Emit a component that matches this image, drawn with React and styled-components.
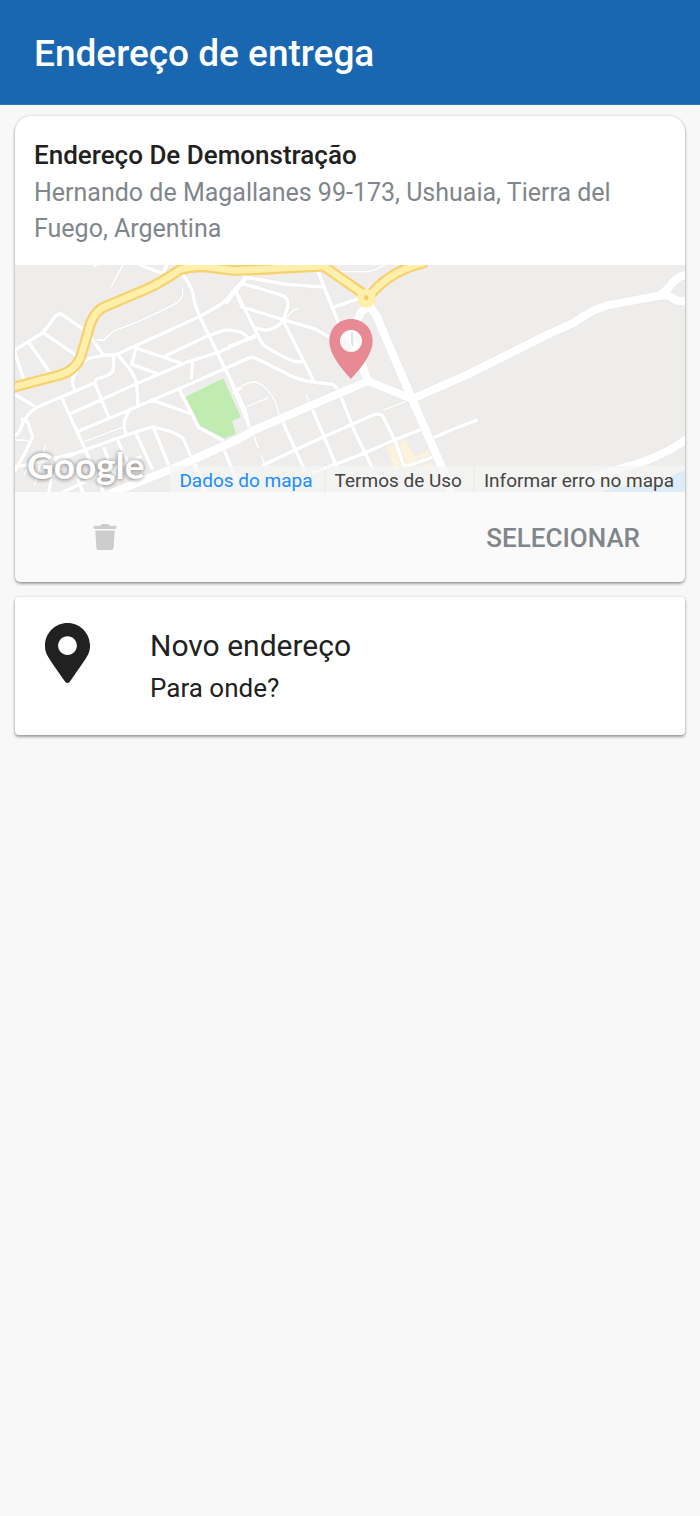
import React from 'react';
import styled, { createGlobalStyle } from 'styled-components';
import { FaMapMarkerAlt, FaTrash } from 'react-icons/fa';

const GlobalStyle = createGlobalStyle`
  * {
    box-sizing: border-box;
  }

  body {
    margin: 0;
    background: #f8f8f8;
    color: #212121;
    font-family: Roboto, 'Liberation Sans', sans-serif;
  }
`;

const Header = styled.header`
  display: flex;
  align-items: center;
  padding: 32px 34px 28px;
  background: #1867b0;
  border-bottom: 1px solid #2f79bb;
`;

const HeaderTitle = styled.h1`
  margin: 0;
  color: #fff;
  font-size: 37px;
  font-weight: 500;
  line-height: 44px;
`;

const AddressList = styled.main`
  display: flex;
  flex-direction: column;
  gap: 15px;
  padding: 11px 15px;
`;

const Card = styled.section`
  background: #fff;
  border-radius: ${props => props.$rounded ? '16px 16px 6px 6px' : '4px'};
  box-shadow: 0 2px 3px rgba(0, 0, 0, 0.34), 0 0 3px rgba(0, 0, 0, 0.16);
  overflow: hidden;
`;

const CardHeader = styled.div`
  padding: 20px 19px 18px;
`;

const AddressName = styled.h2`
  margin: 0;
  font-size: 26px;
  font-weight: 500;
  line-height: 38px;
`;

const AddressText = styled.p`
  margin: 1px 0 0;
  color: #80868b;
  font-size: 25px;
  line-height: 36px;
`;

const MapArea = styled.div`
  position: relative;
  height: 227px;
  background: #eeedec;
`;

const MapDrawing = styled.svg`
  display: block;
  width: 100%;
  height: 100%;
`;

const MapLogo = styled.span`
  position: absolute;
  left: 12px;
  bottom: 3px;
  color: #fff;
  font-family: Lato, sans-serif;
  font-size: 37px;
  font-weight: 700;
  line-height: 48px;
  text-shadow: 0 0 4px rgba(0, 0, 0, 0.36), 0 1px 4px rgba(0, 0, 0, 0.24);
`;

const MapCredits = styled.nav`
  position: absolute;
  right: 0;
  bottom: 0;
  display: flex;
  gap: 2px;
`;

const MapLink = styled.a`
  padding: 3px 11px 0 9px;
  background: rgba(245, 245, 245, 0.7);
  color: ${props => props.$primary ? '#1a8cff' : '#444'};
  font-size: 19px;
  line-height: 23px;
  text-decoration: none;
  white-space: nowrap;
`;

const CardActions = styled.div`
  display: flex;
  align-items: center;
  justify-content: space-between;
  height: 90px;
  padding: 0 30px;
  background: #fafafa;
`;

const IconButton = styled.button`
  display: flex;
  align-items: center;
  justify-content: center;
  width: 120px;
  height: 60px;
  padding: 0;
  border: none;
  background: transparent;
  color: #cdcdcd;
  font-size: 26px;
  cursor: pointer;
`;

const SelectButton = styled.button`
  padding: 14px 15px 12px;
  border: none;
  background: transparent;
  color: #80868b;
  font-family: inherit;
  font-size: 26px;
  font-weight: 500;
  line-height: 32px;
  text-transform: uppercase;
  cursor: pointer;
`;

const NewAddressButton = styled.button`
  display: flex;
  align-items: flex-start;
  gap: 60px;
  width: 100%;
  padding: 26px 30px 28px;
  border: none;
  background: transparent;
  color: #212121;
  font-family: inherit;
  text-align: left;
  cursor: pointer;
`;

const PinIcon = styled(FaMapMarkerAlt)`
  flex: none;
  width: 45px;
  height: 60px;
`;

const NewAddressText = styled.span`
  display: flex;
  flex-direction: column;
`;

const NewAddressTitle = styled.span`
  font-size: 30px;
  line-height: 46px;
`;

const NewAddressSubtitle = styled.span`
  font-size: 26px;
  line-height: 38px;
`;

// stroke width -> roads drawn with it
const roads = [
  {
    width: 5,
    paths: [
      'M282 34 L300 28',
      'M370 28 L334 95',
      'M548 102 V118 Q546 134 526 146 Q430 196 346 226 Q334 232 312 256 L290 254',
      'M252 560 L375 514',
      'M40 556 Q66 552 84 558',
      'M104 690 L136 572',
      'M72 660 L106 600',
      'M895 160 Q870 168 866 182 L850 200',
      'M1010 50 L1104 50 Q1130 44 1160 28',
      'M700 412 Q750 370 774 384 Q800 394 824 436 L838 480',
      'M732 458 L806 428',
      'M918 420 L930 450',
      'M1152 464 L1236 432',
      'M760 540 L775 578',
      'M784 600 L798 640',
    ],
  },
  {
    width: 11,
    paths: [
      'M420 30 L490 56 L500 30',
      'M40 288 L130 232 L165 185 Q176 172 188 180 L262 232 L310 300',
      'M44 290 L72 378',
      'M86 262 L152 356',
      'M128 232 L232 304',
      'M40 416 L108 456',
      'M40 544 Q60 536 66 508 Q78 480 108 458 L226 408 Q212 384 220 366 Q240 322 262 312 Q302 300 350 298',
      'M350 298 L600 184 L656 152 Q680 138 700 108 L740 66',
      'M340 302 Q342 340 338 350 Q326 364 290 372 L284 384 L226 408',
      'M284 384 L326 486',
      'M186 430 L276 630 L312 715',
      'M212 476 L410 386 Q402 348 350 298',
      'M410 386 L414 450',
      'M410 386 L560 322 L660 290 L770 240',
      'M410 272 L395 328 L474 357',
      'M410 280 L548 326',
      'M490 306 L620 244 L660 230 Q680 220 720 230 Q736 236 744 250',
      'M578 322 L574 370',
      'M540 48 Q566 80 578 110 Q580 138 598 182 L660 310 L732 456 L750 524',
      'M236 528 L390 464 L540 400 L740 312 Q752 302 772 312 L860 356 Q890 374 930 380 L1000 388 L1012 402',
      'M454 434 L566 474',
      'M536 400 L596 518 L668 556',
      'M390 464 Q366 500 374 526 L380 540',
      'M170 618 L240 590 L380 540 L455 516 Q524 528 546 548 Q556 560 576 616 L612 710',
      'M410 540 L456 640',
      'M460 516 L518 660',
      'M355 560 L400 660',
      'M312 580 L345 660',
      'M66 494 Q84 492 88 516 L98 546 L72 600 Q58 624 46 646',
      'M44 636 L92 628 L250 588',
      'M146 715 L154 670 L196 620',
      'M180 715 L300 660 L420 606',
      'M250 715 L220 636',
      'M734 66 L860 88 L968 96',
      'M740 66 L680 142',
      'M722 84 L850 122 Q868 132 862 160 L848 200 Q826 222 798 226 L764 218',
      'M706 106 L782 258 L790 270 Q872 322 892 320 L912 320',
      'M740 160 L850 194 L946 222 L994 250',
      'M690 272 L764 246',
      'M850 198 L942 378',
      'M706 106 L726 156',
      'M950 40 L1020 216 L1064 286',
      'M1002 156 L1072 132',
      'M690 372 L752 524',
      'M702 412 L720 400',
      'M848 500 L914 645',
      'M936 460 L1012 640',
      'M1024 428 L1064 530 L1118 640',
      'M790 630 L882 586 L966 548 L1110 484 Q1140 470 1150 486 L1186 560 L1212 634',
      'M930 656 L1080 600 L1186 554 L1262 524',
      'M1296 550 L1370 518 L1430 496',
      'M1218 634 L1300 606',
      'M670 580 L720 700',
      'M580 612 L622 720',
    ],
  },
  {
    width: 25,
    paths: [
      'M330 716 L540 632 L720 550 L760 526 L1104 378 Q1092 354 1088 330 L1050 240 L1084 170 L1112 150',
      'M1104 378 L1236 432',
      'M1100 140 Q1120 170 1128 180 L1236 432 L1336 660 L1352 712',
      'M1236 432 L1400 360 L1640 240 L1720 204 Q1780 162 1826 150 L1980 122 L2006 98 Q2028 62 2070 56',
      'M1980 122 Q2012 118 2026 136 L2070 140',
      'M1740 674 L1900 630 Q1990 604 2066 548',
    ],
  },
];

const highways = [
  'M36 398 L180 360 Q226 346 242 306 L264 232 Q276 176 308 158 L440 102 Q474 88 540 44 Q580 32 620 36 L700 46 L770 44 L870 38 L960 34',
  'M960 26 L1090 116',
  'M1108 124 Q1164 50 1270 24',
];

const MapView = () => (
  <MapDrawing viewBox="45 30 2010 681" preserveAspectRatio="xMidYMid slice" aria-hidden="true">
    <rect x="-3000" y="-1000" width="8000" height="3000" fill="#eeedec" />
    <path d="M556 426 L670 370 L722 486 L696 498 L708 536 L668 552 L600 516 Z" fill="#c1ecb1" />
    <path d="M1160 576 L1182 566 L1208 634 L1186 646 Z M1192 562 L1216 552 L1244 606 L1284 584 L1296 606 L1218 638 Z M1270 634 L1294 622 L1304 644 L1272 644 Z" fill="#fcf3dc" />
    <path d="M1800 715 L1840 696 L1990 690 Q2016 652 2070 642 V720 Z" fill="#a9d5fb" />

    <g fill="none" strokeLinecap="round" strokeLinejoin="round">
      {roads.map(({ width, paths }) => (
        <g key={width}>
          <path d={paths.join(' ')} stroke="#e6e5e4" strokeWidth={width + 3} />
          <path d={paths.join(' ')} stroke="#fff" strokeWidth={width} />
        </g>
      ))}
      <path d={highways.join(' ')} stroke="#f8d06c" strokeWidth="33" />
      <path d={highways.join(' ')} stroke="#feefab" strokeWidth="20" />
      <circle cx="1099" cy="130" r="17" stroke="#feefab" strokeWidth="22" />
    </g>
    <circle cx="1099" cy="128" r="7" fill="#f4cd68" />

    <circle cx="1053" cy="258" r="34" fill="#fff" fillOpacity="0.6" />
    <path d="M1053 232 L1060 232 L1060 276 L1053 266 Z" fill="#e4e3e2" />
    <path
      d="M1053 192 C1016 192 988 221 988 257 C988 305 1038 354 1053 372 C1068 354 1118 305 1118 257 C1118 221 1090 192 1053 192 Z M1053 225 A33 33 0 1 1 1053 291 A33 33 0 1 1 1053 225 Z"
      fill="#e78a93"
      fillRule="evenodd"
    />
  </MapDrawing>
);

const App = () => {
  return (
    <>
      <GlobalStyle />
      <Header>
        <HeaderTitle>Endereço de entrega</HeaderTitle>
      </Header>

      <AddressList>
        <Card $rounded>
          <CardHeader>
            <AddressName>Endereço De Demonstração</AddressName>
            <AddressText>
              Hernando de Magallanes 99-173, Ushuaia, Tierra del Fuego, Argentina
            </AddressText>
          </CardHeader>
          <MapArea>
            <MapView />
            <MapLogo>Google</MapLogo>
            <MapCredits>
              <MapLink href="#dados" $primary>Dados do mapa</MapLink>
              <MapLink href="#termos">Termos de Uso</MapLink>
              <MapLink href="#erro">Informar erro no mapa</MapLink>
            </MapCredits>
          </MapArea>
          <CardActions>
            <IconButton type="button" aria-label="Excluir endereço">
              <FaTrash />
            </IconButton>
            <SelectButton type="button">Selecionar</SelectButton>
          </CardActions>
        </Card>

        <Card>
          <NewAddressButton type="button">
            <PinIcon />
            <NewAddressText>
              <NewAddressTitle>Novo endereço</NewAddressTitle>
              <NewAddressSubtitle>Para onde?</NewAddressSubtitle>
            </NewAddressText>
          </NewAddressButton>
        </Card>
      </AddressList>
    </>
  );
};

export default App;
